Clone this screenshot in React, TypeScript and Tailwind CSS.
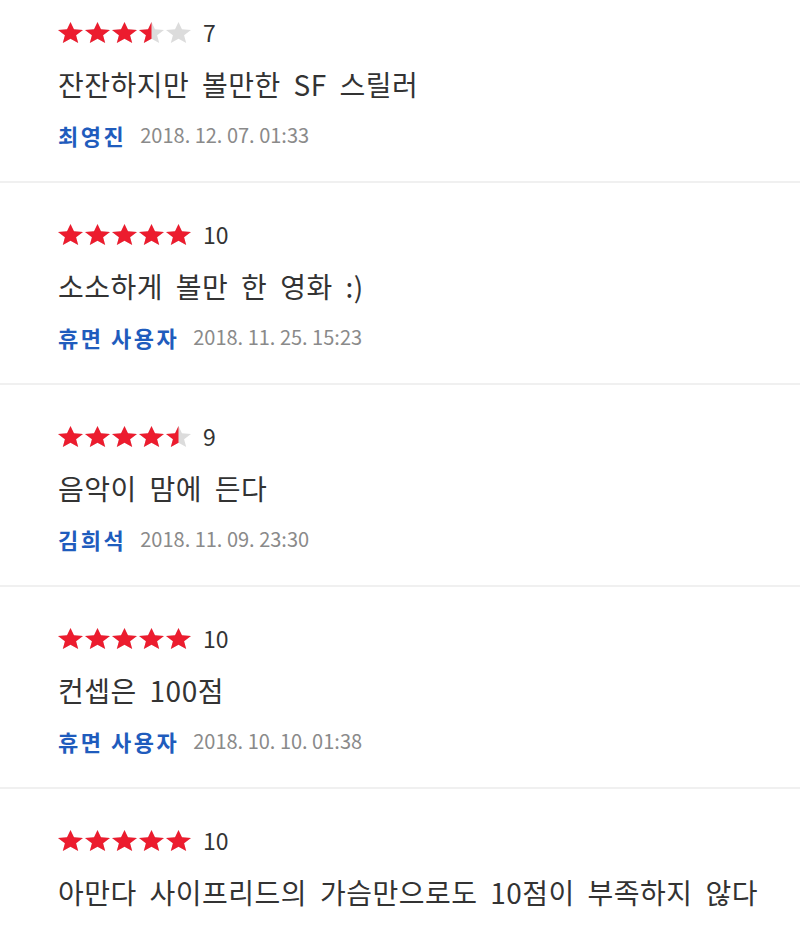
import React from "react";

type Review = { score: number; text: string; author: string; date: string };

const reviews: Review[] = [
  { score: 7, text: "잔잔하지만 볼만한 SF 스릴러", author: "최영진", date: "2018. 12. 07. 01:33" },
  { score: 10, text: "소소하게 볼만 한 영화 :)", author: "휴면 사용자", date: "2018. 11. 25. 15:23" },
  { score: 9, text: "음악이 맘에 든다", author: "김희석", date: "2018. 11. 09. 23:30" },
  { score: 10, text: "컨셉은 100점", author: "휴면 사용자", date: "2018. 10. 10. 01:38" },
  { score: 10, text: "아만다 사이프리드의 가슴만으로도 10점이 부족하지 않다", author: "", date: "" },
];

const STAR = "M12 0.8 L15.1 8.2 L23.2 8.9 L17 14.2 L18.9 22.1 L12 17.9 L5.1 22.1 L7 14.2 L0.8 8.9 L8.9 8.2 Z";

function Star({ fill, id }: { fill: number; id: string }) {
  return (
    <svg width="25" height="21" viewBox="0.8 0.8 22.4 21.3" preserveAspectRatio="none" className="block">
      <defs>
        <clipPath id={id}>
          <rect x="0" y="0" width={0.8 + 22.4 * fill} height="23" />
        </clipPath>
      </defs>
      <path d={STAR} fill="#dcdcdc" />
      <path d={STAR} fill="#ec1c2e" clipPath={`url(#${id})`} />
    </svg>
  );
}

function Stars({ score, idx }: { score: number; idx: number }) {
  const v = score / 2;
  return (
    <div className="flex gap-[2px]">
      {[0, 1, 2, 3, 4].map((i) => {
        const f = Math.max(0, Math.min(1, v - i));
        return <Star key={i} fill={f} id={`s-${idx}-${i}`} />;
      })}
    </div>
  );
}

export default function App() {
  const font = { fontFamily: '"Noto Sans CJK KR", "Noto Sans", sans-serif' };
  return (
    <div className="w-[800px] h-[927px] overflow-hidden bg-white" style={font}>
      {reviews.map((r, i) => (
        <div
          key={i}
          className={`pl-[58px] border-b-2 border-[#f0f0f0] ${i === 0 ? "pt-[21px]" : "pt-[40px]"} pb-[32px]`}
        >
          <div className="flex items-center h-[22px]">
            <Stars score={r.score} idx={i} />
            <span className="ml-[12px] text-[23px] leading-none text-[#333]">{r.score}</span>
          </div>
          <div className="mt-[25px] text-[28px] leading-[32px] text-[#333] [word-spacing:6px] tracking-[0.5px]">
            {r.text}
          </div>
          <div className="mt-[21px] flex items-center h-[28px]">
            <span className="text-[22px] font-bold text-[#1f5cbd] tracking-[2.5px]">{r.author}</span>
            <span className="ml-[14px] text-[20px] text-[#8a8a8a]">{r.date}</span>
          </div>
        </div>
      ))}
    </div>
  );
}
